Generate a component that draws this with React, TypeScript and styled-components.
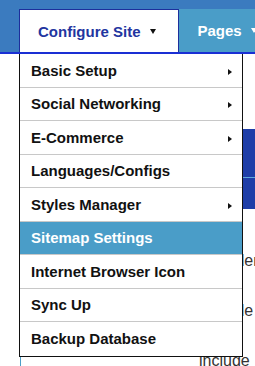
import React from 'react';
import styled, { createGlobalStyle } from 'styled-components';

const GlobalStyle = createGlobalStyle`
  html, body {
    margin: 0;
    padding: 0;
    background: #ffffff;
    font-family: "Liberation Sans", Arial, sans-serif;
    overflow: hidden;
  }
`;

const PageWrapper = styled.div`
  position: relative;
  width: 255px;
  height: 366px;
  overflow: hidden;
`;

const NavBar = styled.nav`
  display: flex;
  align-items: flex-end;
  height: 52px;
  padding-left: 19px;
  background: #3b7bbf;
  border-bottom: 2px solid #1a2fd4;
`;

const Tab = styled.div<{ $active?: boolean }>`
  display: flex;
  align-items: center;
  flex-shrink: 0;
  box-sizing: border-box;
  height: 43px;
  padding: 0 ${(p) => (p.$active ? '22px' : '18px')} 0 ${(p) => (p.$active ? '18px' : '19px')};
  font-size: 15px;
  font-weight: bold;
  color: ${(p) => (p.$active ? '#22359f' : '#ffffff')};
  background: ${(p) => (p.$active ? '#ffffff' : '#4a9dc8')};
  border: ${(p) => (p.$active ? '1px solid #1d2f9c' : 'none')};
  border-bottom: none;
  white-space: nowrap;
`;

const Caret = styled.span<{ $light?: boolean }>`
  display: inline-block;
  margin-left: 9px;
  width: 0;
  height: 0;
  border-top: 5px solid ${(p) => (p.$light ? '#ffffff' : '#111111')};
  border-left: 3.5px solid transparent;
  border-right: 3.5px solid transparent;
`;

const Content = styled.main`
  display: flex;
  flex-direction: column;
  margin-left: 20px;
  padding-top: 75px;
  border-left: 1px solid #4a9ec8;
  min-height: 400px;
`;

const Banner = styled.div<{ $h: number }>`
  height: ${(p) => p.$h}px;
  background: #1f3ea8;
`;

const BannerRule = styled.div`
  height: 1px;
  background: #5fa8dc;
`;

const InfoList = styled.div`
  display: flex;
  flex-direction: column;
  gap: 32px;
  padding: 43px 0 0 178px;
`;

const InfoLine = styled.div`
  font-size: 16px;
  line-height: 18px;
  color: #333333;
  white-space: nowrap;
`;

const Menu = styled.ul`
  position: absolute;
  top: 54px;
  left: 19px;
  width: 224px;
  margin: 0;
  padding: 0;
  list-style: none;
  box-sizing: border-box;
  background: #ffffff;
  border: 1px solid #111111;
  border-top: none;
`;

const MenuItem = styled.li<{ $selected?: boolean }>`
  display: flex;
  align-items: center;
  justify-content: space-between;
  box-sizing: border-box;
  height: 33.5px;
  padding: 0 10px 0 11px;
  font-size: 15px;
  font-weight: bold;
  color: ${(p) => (p.$selected ? '#ffffff' : '#111111')};
  background: ${(p) => (p.$selected ? '#4a9dc8' : '#ffffff')};
  border-bottom: 1px solid #c8c8c8;

  &:last-child {
    border-bottom: none;
  }
`;

const SubArrow = styled.span`
  width: 0;
  height: 0;
  margin-top: 3px;
  border-left: 4px solid #111111;
  border-top: 3.5px solid transparent;
  border-bottom: 3.5px solid transparent;
`;

const menuItems = [
  { label: 'Basic Setup', sub: true },
  { label: 'Social Networking', sub: true },
  { label: 'E-Commerce', sub: true },
  { label: 'Languages/Configs', sub: false },
  { label: 'Styles Manager', sub: true },
  { label: 'Sitemap Settings', sub: false, selected: true },
  { label: 'Internet Browser Icon', sub: false },
  { label: 'Sync Up', sub: false },
  { label: 'Backup Database', sub: false },
];

const App = () => {
  return (
    <PageWrapper>
      <GlobalStyle />
      <NavBar>
        <Tab $active>
          Configure Site
          <Caret />
        </Tab>
        <Tab>
          Pages
          <Caret $light />
        </Tab>
      </NavBar>
      <Content>
        <Banner $h={48} />
        <BannerRule />
        <Banner $h={31} />
        <InfoList>
          <InfoLine>Provider</InfoLine>
          <InfoLine>Sample</InfoLine>
          <InfoLine>include</InfoLine>
        </InfoList>
      </Content>
      <Menu>
        {menuItems.map((item) => (
          <MenuItem key={item.label} $selected={item.selected}>
            {item.label}
            {item.sub && <SubArrow />}
          </MenuItem>
        ))}
      </Menu>
    </PageWrapper>
  );
};

export default App;
